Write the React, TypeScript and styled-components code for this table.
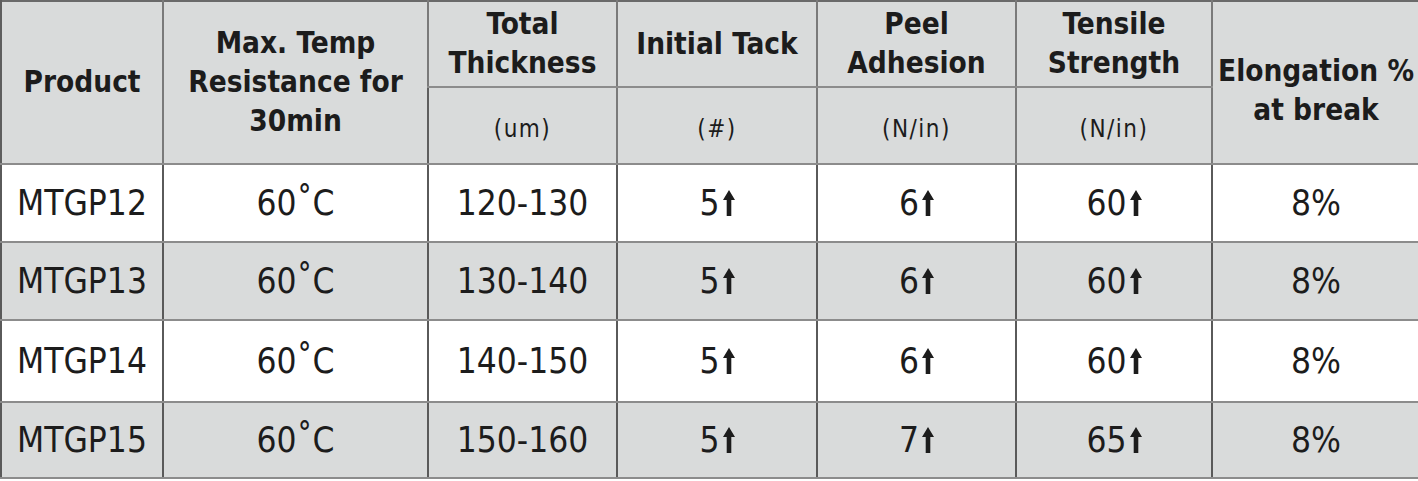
import * as React from "react";
import styled, { createGlobalStyle } from "styled-components";

const GlobalStyle = createGlobalStyle`
  html, body {
    margin: 0;
    padding: 0;
    background: #ffffff;
  }
  body {
    font-family: "DejaVu Sans Condensed", "DejaVu Sans", sans-serif;
    font-stretch: condensed;
    color: #1c1c1c;
  }
`;

const Table = styled.table`
  width: 1418px;
  table-layout: fixed;
  border-collapse: collapse;
  border-top: 2px solid #6a6a6a;
  border-left: 2px solid #5e5e5e;
`;

const Head = styled.th<{ $sub?: boolean; $shift?: number }>`
  background: #d9dbdb;
  font-weight: ${(p) => (p.$sub ? 400 : 700)};
  font-size: ${(p) => (p.$sub ? "24px" : "29.5px")};
  letter-spacing: ${(p) => (p.$sub ? "1.5px" : "0")};
  line-height: ${(p) => (p.$sub ? "28px" : "39px")};
  text-align: center;
  vertical-align: middle;
  padding: ${(p) => (p.$shift ? `${p.$shift}px 0 0` : "0")};
  padding-top: ${(p) => (p.$sub ? "6px" : undefined)};
  border-left: 2px solid #7a7a7a;
  border-bottom: 2px solid #8c8c8c;
  &:first-child {
    border-left-color: #5e5e5e;
  }
`;

const Row = styled.tr<{ $shade: boolean; $h: number }>`
  height: ${(p) => p.$h}px;
  background: ${(p) => (p.$shade ? "#d9dbdb" : "#ffffff")};
`;

const Cell = styled.td`
  font-size: 35px;
  text-align: center;
  vertical-align: middle;
  padding: 0;
  border-left: 2px solid #5a5a5a;
  border-bottom: 2px solid #8c8c8c;
`;

const Value = styled.span`
  display: inline-flex;
  align-items: flex-end;
  gap: 3px;
`;

const Arrow = styled.svg`
  width: 12px;
  height: 26px;
  margin-bottom: 7px;
`;

const UpArrow = () => (
  <Arrow viewBox="0 0 12 26">
    <path d="M6 0 L12 10 L8.3 10 L8.3 26 L3.7 26 L3.7 10 L0 10 Z" fill="#1c1c1c" />
  </Arrow>
);

interface Product {
  name: string;
  thickness: string;
  tack: string;
  peel: string;
  tensile: string;
  height: number;
}

const products: Product[] = [
  { name: "MTGP12", thickness: "120-130", tack: "5", peel: "6", tensile: "60", height: 78 },
  { name: "MTGP13", thickness: "130-140", tack: "5", peel: "6", tensile: "60", height: 78 },
  { name: "MTGP14", thickness: "140-150", tack: "5", peel: "6", tensile: "60", height: 82 },
  { name: "MTGP15", thickness: "150-160", tack: "5", peel: "7", tensile: "65", height: 76 },
];

const Min = ({ v }: { v: string }) => (
  <Value>
    {v}
    <UpArrow />
  </Value>
);

export default function App() {
  return (
    <>
      <GlobalStyle />
      <Table>
        <colgroup>
          <col style={{ width: 162 }} />
          <col style={{ width: 265 }} />
          <col style={{ width: 189 }} />
          <col style={{ width: 200 }} />
          <col style={{ width: 199 }} />
          <col style={{ width: 196 }} />
          <col style={{ width: 207 }} />
        </colgroup>
        <thead>
          <tr style={{ height: 86 }}>
            <Head rowSpan={2}>Product</Head>
            <Head rowSpan={2}>
              Max. Temp
              <br />
              Resistance for
              <br />
              30min
            </Head>
            <Head>
              Total
              <br />
              Thickness
            </Head>
            <Head>Initial Tack</Head>
            <Head>
              Peel
              <br />
              Adhesion
            </Head>
            <Head>
              Tensile
              <br />
              Strength
            </Head>
            <Head rowSpan={2} $shift={16}>
              Elongation %
              <br />
              at break
            </Head>
          </tr>
          <tr style={{ height: 77 }}>
            <Head $sub>(um)</Head>
            <Head $sub>(#)</Head>
            <Head $sub>(N/in)</Head>
            <Head $sub>(N/in)</Head>
          </tr>
        </thead>
        <tbody>
          {products.map((p, i) => (
            <Row key={p.name} $shade={i % 2 === 1} $h={p.height}>
              <Cell>{p.name}</Cell>
              <Cell>60˚C</Cell>
              <Cell>{p.thickness}</Cell>
              <Cell>
                <Min v={p.tack} />
              </Cell>
              <Cell>
                <Min v={p.peel} />
              </Cell>
              <Cell>
                <Min v={p.tensile} />
              </Cell>
              <Cell>8%</Cell>
            </Row>
          ))}
        </tbody>
      </Table>
    </>
  );
}
